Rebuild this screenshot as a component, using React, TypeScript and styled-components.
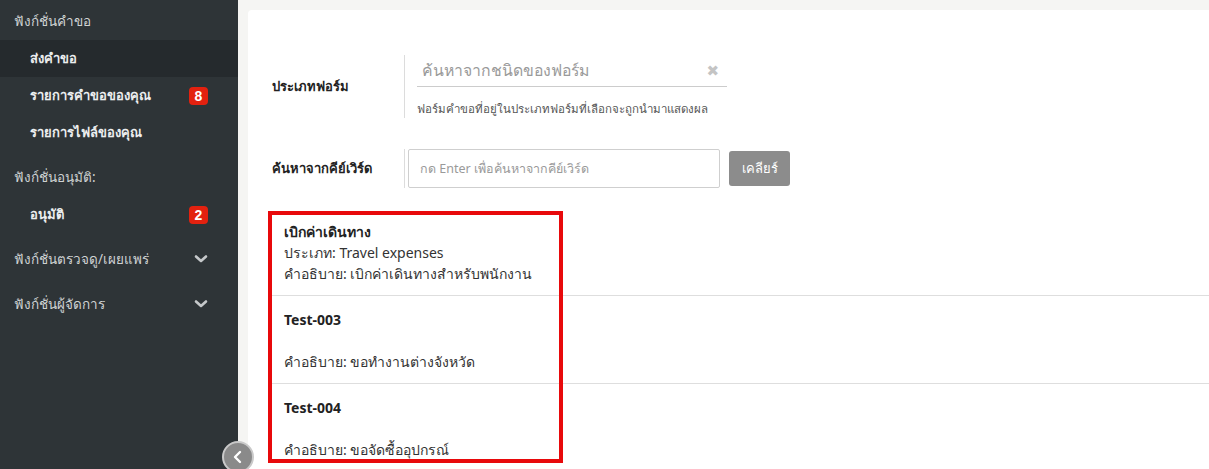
import React from 'react';
import styled, { createGlobalStyle } from 'styled-components';

const GlobalStyle = createGlobalStyle`
  html, body {
    margin: 0;
    padding: 0;
    background: #f5f5f3;
    font-family: "Noto Sans", "DejaVu Sans", sans-serif;
  }
  * {
    box-sizing: border-box;
  }
`;

const Layout = styled.div`
  display: flex;
  height: 469px;
  overflow: hidden;
  position: relative;
`;

const Sidebar = styled.nav`
  width: 238px;
  flex-shrink: 0;
  background: #2e3437;
  color: #d4d6d7;
`;

const SectionHeader = styled.div<{ $first?: boolean }>`
  display: flex;
  align-items: center;
  justify-content: space-between;
  padding: ${p => (p.$first ? '11px 28px 9px 14px' : '16px 28px 9px 14px')};
  font-size: 13.5px;
  line-height: 20px;
  color: #cfd2d3;
`;

const MenuItem = styled.div<{ $active?: boolean }>`
  display: flex;
  align-items: center;
  justify-content: space-between;
  height: 37px;
  padding: 0 30px 0 30px;
  font-size: 13px;
  font-weight: bold;
  color: #eceeef;
  background: ${p => (p.$active ? '#252a2d' : 'transparent')};
`;

const Badge = styled.span`
  display: inline-flex;
  align-items: center;
  justify-content: center;
  min-width: 19px;
  height: 18px;
  padding: 0 4px;
  border-radius: 4px;
  background: #e3210f;
  color: #fff;
  font-size: 14px;
  font-weight: bold;
  font-family: "Liberation Sans", sans-serif;
`;

const Chevron = styled.svg`
  width: 14px;
  height: 10px;
  margin-right: 2px;
`;

const CollapseButton = styled.div`
  position: absolute;
  left: 222px;
  top: 441px;
  width: 32px;
  height: 32px;
  border-radius: 50%;
  background: #8a8a8a;
  border: 2px solid #c9c9c9;
  display: flex;
  align-items: center;
  justify-content: center;
`;

const Main = styled.main`
  flex: 1;
  padding: 10px 0 0 10px;
  min-width: 0;
`;

const Card = styled.section`
  background: #fff;
  border-top-left-radius: 4px;
  height: 100%;
  padding: 45px 0 0 20px;
`;

const FormRow = styled.div<{ $gap: number }>`
  display: flex;
  align-items: center;
  margin-bottom: ${p => p.$gap}px;
`;

const Label = styled.div`
  width: 136px;
  padding-left: 4px;
  font-size: 13px;
  font-weight: bold;
  color: #222;
`;

const Field = styled.div<{ $pad: number }>`
  border-left: 1px solid #dcdcdc;
  padding-left: ${p => p.$pad}px;
  align-self: stretch;
  display: flex;
  flex-direction: column;
`;

const UnderlineInput = styled.div`
  width: 310px;
  height: 32px;
  border-bottom: 1px solid #cccccc;
  display: flex;
  align-items: center;
  justify-content: space-between;
  padding: 0 8px 0 5px;
  font-size: 15.8px;
  color: #9a9a9a;
`;

const ClearX = styled.span`
  font-size: 15px;
  font-weight: bold;
  color: #c4c4c4;
  font-family: "DejaVu Sans", sans-serif;
`;

const HelpText = styled.div`
  margin-top: 12px;
  font-size: 11.5px;
  line-height: 19px;
  color: #555;
`;

const InlineField = styled.div`
  display: flex;
  align-items: center;
  gap: 9px;
`;

const BoxInput = styled.div`
  width: 312px;
  height: 39px;
  border: 1px solid #cfcfcf;
  border-radius: 2px;
  display: flex;
  align-items: center;
  padding-left: 11px;
  font-size: 12.5px;
  color: #9a9a9a;
`;

const Button = styled.button`
  width: 61px;
  height: 35px;
  border: none;
  border-radius: 3px;
  background: #8c8c8c;
  color: #fff;
  font-family: inherit;
  font-size: 13px;
`;

const List = styled.div`
  position: relative;
`;

const ListItem = styled.div`
  padding: 13px 16px 11px;
  border-top: 1px solid #dedede;
  font-size: 14px;
  line-height: 21px;
  color: #333;
  &:first-child {
    border-top: none;
    padding-top: 14px;
  }
`;

const ItemTitle = styled.div`
  font-weight: bold;
  color: #222;
  min-height: 21px;
`;

const ItemLine = styled.div`
  min-height: 21px;
`;

const Highlight = styled.div`
  position: absolute;
  left: 0;
  top: 4px;
  width: 295px;
  height: 252px;
  border: 4px solid #e8090b;
  pointer-events: none;
`;

const ChevronDown = () => (
  <Chevron viewBox="0 0 14 10">
    <path d="M2 2.5 L7 7 L12 2.5" fill="none" stroke="#c5c8ca" strokeWidth="2.6" strokeLinecap="round" strokeLinejoin="round" />
  </Chevron>
);

const forms = [
  { title: 'เบิกค่าเดินทาง', type: 'ประเภท: Travel expenses', desc: 'คำอธิบาย: เบิกค่าเดินทางสำหรับพนักงาน' },
  { title: 'Test-003', type: '', desc: 'คำอธิบาย: ขอทำงานต่างจังหวัด' },
  { title: 'Test-004', type: '', desc: 'คำอธิบาย: ขอจัดซื้ออุปกรณ์' },
];

const App: React.FC = () => {
  return (
    <>
      <GlobalStyle />
      <Layout>
        <Sidebar>
          <SectionHeader $first>ฟังก์ชั่นคำขอ</SectionHeader>
          <MenuItem $active>ส่งคำขอ</MenuItem>
          <MenuItem>
            รายการคำขอของคุณ <Badge>8</Badge>
          </MenuItem>
          <MenuItem>รายการไฟล์ของคุณ</MenuItem>
          <SectionHeader>ฟังก์ชั่นอนุมัติ:</SectionHeader>
          <MenuItem>
            อนุมัติ <Badge>2</Badge>
          </MenuItem>
          <SectionHeader>
            ฟังก์ชั่นตรวจดู/เผยแพร่ <ChevronDown />
          </SectionHeader>
          <SectionHeader>
            ฟังก์ชั่นผู้จัดการ <ChevronDown />
          </SectionHeader>
        </Sidebar>

        <Main>
          <Card>
            <FormRow $gap={31}>
              <Label>ประเภทฟอร์ม</Label>
              <Field $pad={12}>
                <UnderlineInput>
                  ค้นหาจากชนิดของฟอร์ม
                  <ClearX>✖</ClearX>
                </UnderlineInput>
                <HelpText>ฟอร์มคำขอที่อยู่ในประเภทฟอร์มที่เลือกจะถูกนำมาแสดงผล</HelpText>
              </Field>
            </FormRow>

            <FormRow $gap={19}>
              <Label>ค้นหาจากคีย์เวิร์ด</Label>
              <Field $pad={3}>
                <InlineField>
                  <BoxInput>กด Enter เพื่อค้นหาจากคีย์เวิร์ด</BoxInput>
                  <Button>เคลียร์</Button>
                </InlineField>
              </Field>
            </FormRow>

            <List>
              {forms.map(f => (
                <ListItem key={f.title}>
                  <ItemTitle>{f.title}</ItemTitle>
                  <ItemLine>{f.type}</ItemLine>
                  <ItemLine>{f.desc}</ItemLine>
                </ListItem>
              ))}
              <Highlight />
            </List>
          </Card>
        </Main>

        <CollapseButton>
          <svg width="14" height="14" viewBox="0 0 14 14">
            <path d="M9 2 L4 7 L9 12" fill="none" stroke="#fff" strokeWidth="2.4" strokeLinecap="round" strokeLinejoin="round" />
          </svg>
        </CollapseButton>
      </Layout>
    </>
  );
};

export default App;
